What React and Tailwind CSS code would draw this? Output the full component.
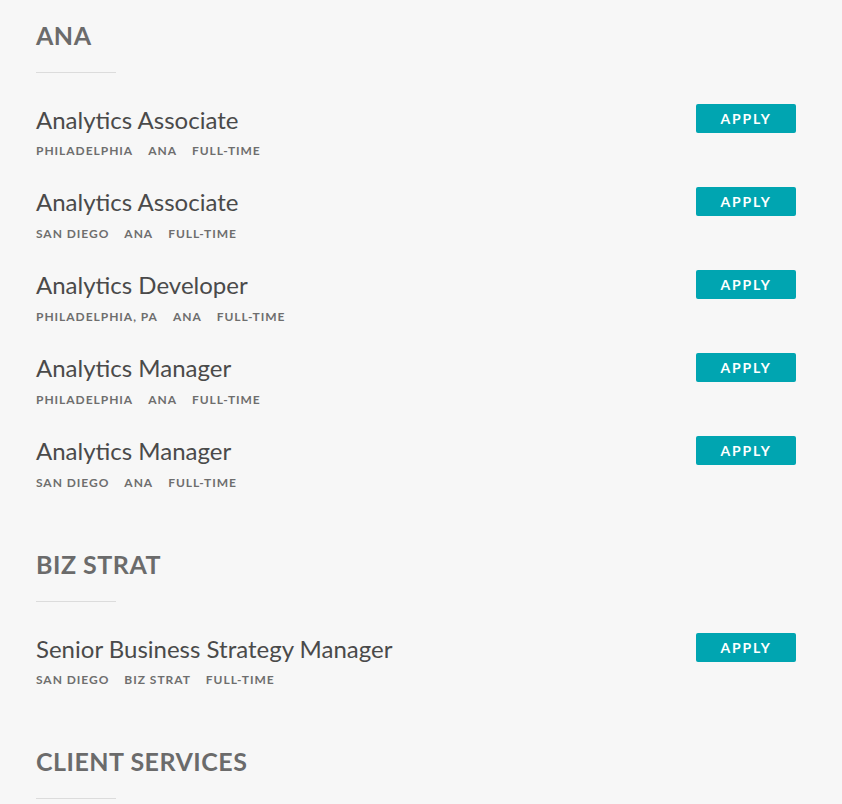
import React from "react";

const sections = [
  {
    name: "ANA",
    jobs: [
      { title: "Analytics Associate", loc: "PHILADELPHIA", dept: "ANA" },
      { title: "Analytics Associate", loc: "SAN DIEGO", dept: "ANA" },
      { title: "Analytics Developer", loc: "PHILADELPHIA, PA", dept: "ANA" },
      { title: "Analytics Manager", loc: "PHILADELPHIA", dept: "ANA" },
      { title: "Analytics Manager", loc: "SAN DIEGO", dept: "ANA" },
    ],
  },
  {
    name: "BIZ STRAT",
    jobs: [
      { title: "Senior Business Strategy Manager", loc: "SAN DIEGO", dept: "BIZ STRAT" },
    ],
  },
  { name: "CLIENT SERVICES", jobs: [] },
];

function Job({ job }) {
  return (
    <div className="flex items-start justify-between">
      <div className="flex flex-col">
        <div className="text-[24px] leading-[1.2] text-[#4a4a4a]">{job.title}</div>
        <div className="mt-[9.5px] flex gap-[15px] text-[12px] leading-[1.2] font-bold tracking-[0.08em] text-[#6e6e6e]">
          <span>{job.loc}</span>
          <span>{job.dept}</span>
          <span>FULL-TIME</span>
        </div>
      </div>
      <button className="mt-[-1.5px] flex h-[29px] w-[100px] items-center justify-center rounded-[2px] bg-[#00a5b1] text-[14px] font-bold tracking-[0.13em] text-white">
        APPLY
      </button>
    </div>
  );
}

export default function App() {
  return (
    <div
      className="min-h-[804px] bg-[#f7f7f7] pl-[36px] pr-[46px] pt-[20px]"
      style={{ fontFamily: "Lato, 'Open Sans', sans-serif" }}
    >
      {sections.map((s, i) => (
        <div key={s.name} className={i > 0 ? "mt-[59px]" : ""}>
          <h2 className="text-[25px] leading-[1.2] font-bold tracking-[0.02em] text-[#6b6b6b]">{s.name}</h2>
          <div className="mt-[22px] h-px w-[80px] bg-[#dcdcdc]" />
          {s.jobs.length > 0 && (
            <div className="mt-[32.5px] flex flex-col gap-[30.3px]">
              {s.jobs.map((j, k) => (
                <Job key={k} job={j} />
              ))}
            </div>
          )}
        </div>
      ))}
    </div>
  );
}
